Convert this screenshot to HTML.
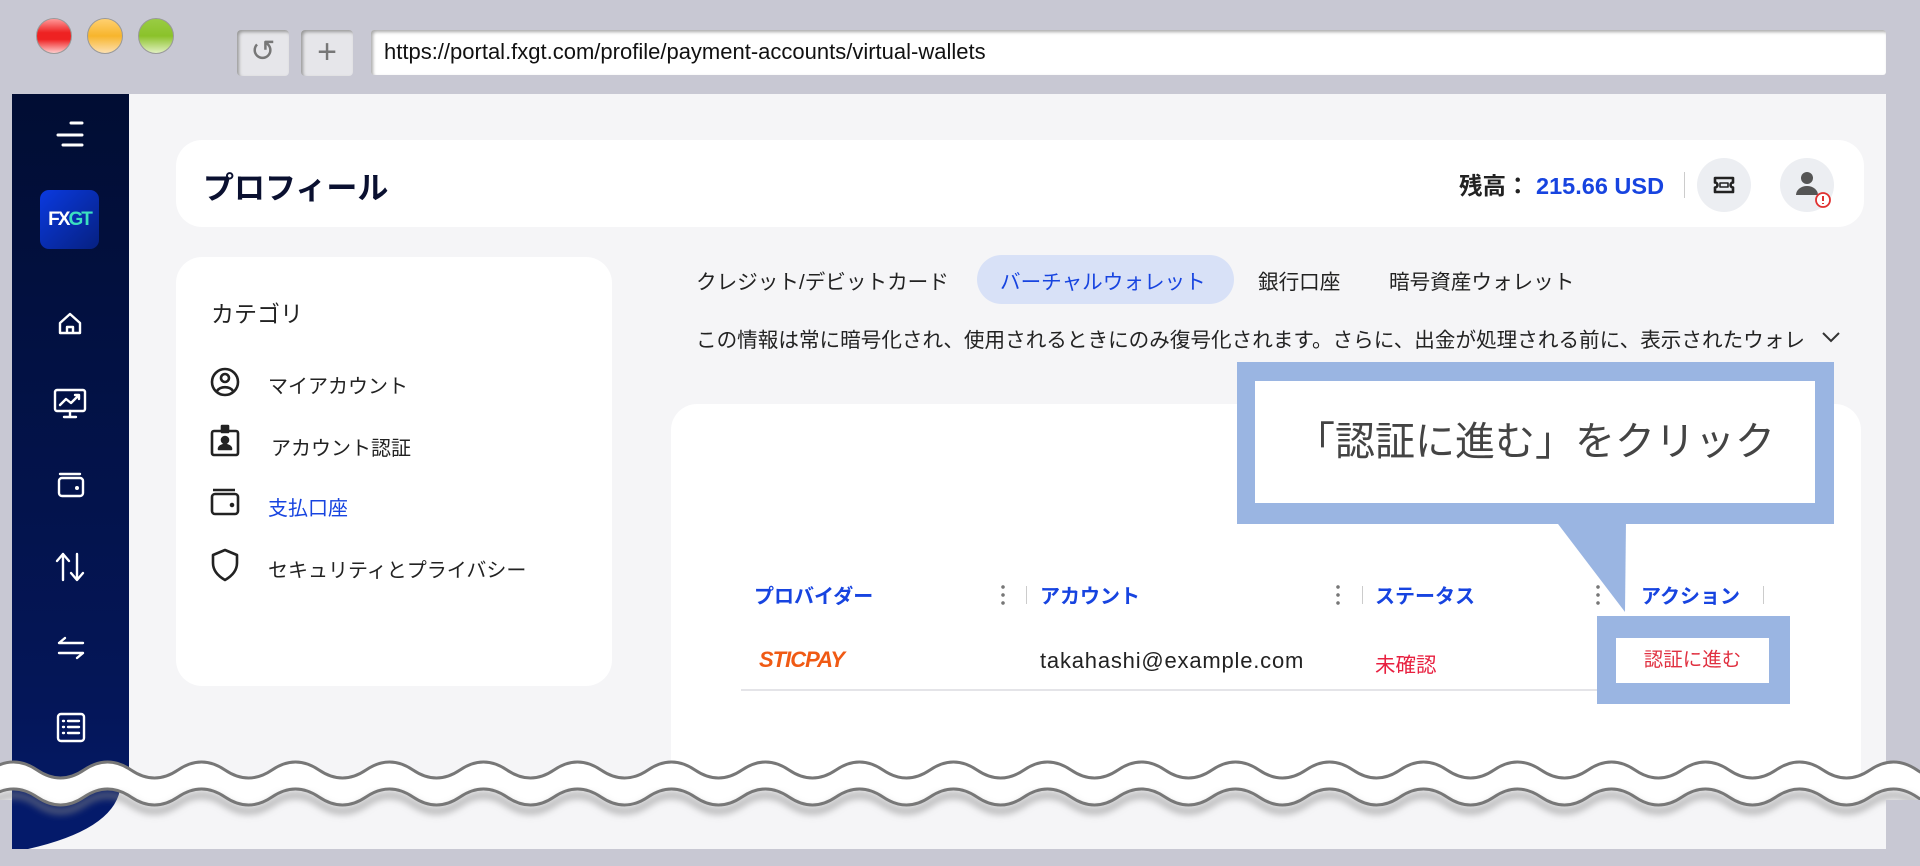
<!DOCTYPE html>
<html><head><meta charset="utf-8"><style>
*{margin:0;padding:0;box-sizing:border-box}
body{width:1920px;height:866px;overflow:hidden;background:#c8c8d3;font-family:"Liberation Sans","Noto Sans CJK JP",sans-serif;position:relative;color:#1a1a2a}
.abs{position:absolute}
.light{width:36px;height:36px;border-radius:50%;top:18px;border:1px solid #999}
.btn{top:30px;width:52px;height:46px;background:#e6e6ea;border-radius:4px;box-shadow:inset 2px 2px 3px #999;color:#777;font-size:34px;text-align:center;line-height:44px}
.url{left:371px;top:30px;width:1515px;height:45px;background:#fff;border-radius:3px;box-shadow:inset 2px 2px 3px #aaa;font-size:22px;line-height:44px;padding-left:13px;color:#111}
.main{left:12px;top:94px;width:1874px;height:755px;background:#f5f5f7;overflow:hidden}
.side{left:12px;top:94px;width:117px;height:755px;background:linear-gradient(180deg,#010d33,#041658 80%,#041a6a)}
.card{background:#fff;border-radius:26px}
.mi{left:268px;font-size:20px;color:#222}
.tab{top:265px;font-size:20.6px;color:#222}
.th{top:580px;font-size:20px;font-weight:bold;color:#1744e0}
.dots{top:583px;width:4px;height:22px;background:radial-gradient(circle,#777 1.6px,transparent 2px) 0 0/4px 8px}
.vd{top:586px;width:1px;height:18px;background:#ccc}
</style></head><body>
<div class="abs light" style="left:36px;background:linear-gradient(#f99,#e22 40%,#e22 60%,#fcc)"></div>
<div class="abs light" style="left:87px;background:linear-gradient(#ffd070,#f7b52c 50%,#fde0b0)"></div>
<div class="abs light" style="left:138px;background:linear-gradient(#9c4,#8bc22a 50%,#e0f0c0)"></div>
<div class="abs btn" style="left:237px;font-size:30px">↺</div>
<div class="abs btn" style="left:301px">+</div>
<div class="abs url">https://portal.fxgt.com/profile/payment-accounts/virtual-wallets</div>

<div class="abs main"></div>
<div class="abs side"></div>
<svg class="abs" style="left:12px;top:94px" width="120" height="680" fill="none" stroke="#fff" stroke-width="2.4" stroke-linecap="round" stroke-linejoin="round">
 <path d="M59 29h11M46 41h24M51 51h19" stroke-width="3"/>
 <path d="M48 229l10-9 10 9v10h-20z M55 239v-6h6v6"/>
 <rect x="43" y="296" width="30" height="21" rx="2"/><path d="M52 323h12M58 317v6M48 311l6-6 5 4 8-8M63 301h4v4"/>
 <rect x="47" y="384" width="24" height="18" rx="3"/><path d="M48 380h20"/><circle cx="65" cy="394" r="0.8" fill="#fff"/>
 <path d="M51 486v-26M45 467l6-7 6 7M65 460v26M59 479l6 7 6-7"/>
 <path d="M47 549h24M47 549l6-5M71 559h-24M71 559l-6 5"/>
 <rect x="46" y="620" width="26" height="27" rx="3"/><path d="M51 627h1M56 627h11M51 633h1M56 633h11M51 639h1M56 639h11"/>
</svg>
<div class="abs" style="left:40px;top:190px;width:59px;height:59px;border-radius:9px;background:linear-gradient(135deg,#0a3ae0,#062080);color:#fff;font-weight:bold;font-size:19px;line-height:59px;text-align:center;letter-spacing:-2px">FX<span style="color:#3ce0c0">GT</span></div>

<div class="abs card" style="left:176px;top:140px;width:1688px;height:87px"></div>
<div class="abs" style="left:203px;top:163px;font-size:31px;font-weight:bold;color:#0a1030">プロフィール</div>
<div class="abs" style="left:1459px;top:167px;font-size:23.5px;font-weight:bold;color:#222">残高： <span style="color:#1744e0">215.66 USD</span></div>
<div class="abs" style="left:1684px;top:172px;width:1px;height:26px;background:#ccc"></div>
<div class="abs" style="left:1697px;top:158px;width:54px;height:54px;border-radius:50%;background:#eceef2"></div>
<svg class="abs" style="left:1712px;top:174px" width="24" height="22" fill="none" stroke="#222" stroke-width="2.6" stroke-linejoin="round"><path d="M3 4h18v4.5a2.5 2.5 0 0 0 0 5V18H3v-4.5a2.5 2.5 0 0 0 0-5z"/><path d="M8 9h8v4H8z" stroke-width="1.6"/></svg>
<div class="abs" style="left:1780px;top:158px;width:54px;height:54px;border-radius:50%;background:#eceef2"></div>
<svg class="abs" style="left:1792px;top:168px" width="40" height="40"><circle cx="15" cy="10" r="6" fill="#555"/><path d="M4 27a11 9 0 0 1 22 0z" fill="#555"/><circle cx="31" cy="32" r="7" fill="#fff" stroke="#e03030" stroke-width="1.8"/><path d="M31 28v5M31 35v1" stroke="#e03030" stroke-width="2"/></svg>

<div class="abs card" style="left:176px;top:257px;width:436px;height:429px"></div>
<div class="abs" style="left:211px;top:295px;font-size:23px;color:#222">カテゴリ</div>
<svg class="abs" style="left:208px;top:365px" width="36" height="220" fill="none" stroke="#222" stroke-width="2.6" stroke-linejoin="round">
 <circle cx="17" cy="17" r="13"/><circle cx="17" cy="13" r="4"/><path d="M9 26a9 7 0 0 1 16 0"/>
 <rect x="4" y="66" width="26" height="24" rx="2"/><rect x="14" y="61" width="6" height="6" fill="#222"/><circle cx="17" cy="75" r="3" fill="#222"/><path d="M11 84a6 4 0 0 1 12 0z" fill="#222"/>
 <rect x="4" y="129" width="26" height="20" rx="3"/><path d="M5 125h22"/><circle cx="24" cy="140" r="1" fill="#222"/>
 <path d="M17 185l12 5v8c0 8-5 13-12 17-7-4-12-9-12-17v-8z"/>
</svg>
<div class="abs mi" style="top:370px">マイアカウント</div>
<div class="abs mi" style="top:432px;left:271px">アカウント認証</div>
<div class="abs mi" style="top:492px;color:#1744e0">支払口座</div>
<div class="abs mi" style="top:554px">セキュリティとプライバシー</div>

<div class="abs tab" style="left:696px">クレジット/デビットカード</div>
<div class="abs" style="left:977px;top:255px;width:257px;height:49px;border-radius:25px;background:#d8e1f7"></div>
<div class="abs tab" style="left:1000px;color:#1744e0">バーチャルウォレット</div>
<div class="abs tab" style="left:1258px">銀行口座</div>
<div class="abs tab" style="left:1389px">暗号資産ウォレット</div>
<div class="abs" style="left:696px;top:323px;font-size:20.6px;color:#222;white-space:nowrap">この情報は常に暗号化され、使用されるときにのみ復号化されます。さらに、出金が処理される前に、表示されたウォレ</div>
<svg class="abs" style="left:1821px;top:330px" width="20" height="14" fill="none" stroke="#333" stroke-width="2"><path d="M2 3l8 8 8-8"/></svg>

<div class="abs card" style="left:671px;top:404px;width:1190px;height:400px"></div>
<div class="abs th" style="left:754px">プロバイダー</div>
<div class="abs dots" style="left:1001px"></div><div class="abs vd" style="left:1026px"></div>
<div class="abs th" style="left:1040px">アカウント</div>
<div class="abs dots" style="left:1336px"></div><div class="abs vd" style="left:1362px"></div>
<div class="abs th" style="left:1375px">ステータス</div>
<div class="abs dots" style="left:1596px"></div>
<div class="abs th" style="left:1641px">アクション</div><div class="abs vd" style="left:1763px"></div>
<div class="abs" style="left:759px;top:647px;font-size:22px;font-weight:bold;font-style:italic;color:#f05a14;letter-spacing:-1px">STICPAY</div>
<div class="abs" style="left:1040px;top:648px;font-size:22px;color:#222;letter-spacing:0.8px">takahashi@example.com</div>
<div class="abs" style="left:1375px;top:648px;font-size:20.5px;color:#e82040">未確認</div>
<div class="abs" style="left:741px;top:689px;width:860px;height:2px;background:#e4e4e8"></div>
<div class="abs" style="left:1597px;top:616px;width:193px;height:88px;background:#9ab5e2"></div>
<div class="abs" style="left:1616px;top:638px;width:153px;height:45px;background:#fff;color:#e03040;font-size:19.5px;text-align:center;line-height:45px">認証に進む</div>

<svg class="abs" style="left:0;top:0" width="1920" height="866"><path d="M1555 520L1626 520L1625 612Z" fill="#9ab5e2"/></svg>
<div class="abs" style="left:1237px;top:362px;width:597px;height:162px;background:#9ab5e2"></div>
<div class="abs" style="left:1255px;top:381px;width:560px;height:122px;background:#fff;font-size:40px;color:#444;text-align:center;line-height:122px">「認証に進む」をクリック</div>

<svg class="abs" style="left:0;top:0" width="1920" height="866">
 <defs><filter id="sh" x="-5%" y="-50%" width="110%" height="300%"><feGaussianBlur stdDeviation="4"/></filter></defs>
 <path fill="#f5f5f7" d="M-10 797q23.5 -16 47 0t47 0t47 0t47 0t47 0t47 0t47 0t47 0t47 0t47 0t47 0t47 0t47 0t47 0t47 0t47 0t47 0t47 0t47 0t47 0t47 0t47 0t47 0t47 0t47 0t47 0t47 0t47 0t47 0t47 0t47 0t47 0t47 0t47 0t47 0t47 0t47 0t47 0t47 0t47 0t47 0t47 0t47 0L2011 849H-10Z"/>
 <path d="M12 790H120Q112 830 28 849H12Z" fill="#041a6a"/>
 <path fill="#fff" d="M-10 770q23.5 -16 47 0t47 0t47 0t47 0t47 0t47 0t47 0t47 0t47 0t47 0t47 0t47 0t47 0t47 0t47 0t47 0t47 0t47 0t47 0t47 0t47 0t47 0t47 0t47 0t47 0t47 0t47 0t47 0t47 0t47 0t47 0t47 0t47 0t47 0t47 0t47 0t47 0t47 0t47 0t47 0t47 0t47 0t47 0L2011 797q-23.5 -16 -47 0t-47 0t-47 0t-47 0t-47 0t-47 0t-47 0t-47 0t-47 0t-47 0t-47 0t-47 0t-47 0t-47 0t-47 0t-47 0t-47 0t-47 0t-47 0t-47 0t-47 0t-47 0t-47 0t-47 0t-47 0t-47 0t-47 0t-47 0t-47 0t-47 0t-47 0t-47 0t-47 0t-47 0t-47 0t-47 0t-47 0t-47 0t-47 0t-47 0t-47 0t-47 0t-47 0Z"/>
 <path fill="none" stroke="#888" stroke-width="4" filter="url(#sh)" transform="translate(0,6)" d="M-10 797q23.5 -16 47 0t47 0t47 0t47 0t47 0t47 0t47 0t47 0t47 0t47 0t47 0t47 0t47 0t47 0t47 0t47 0t47 0t47 0t47 0t47 0t47 0t47 0t47 0t47 0t47 0t47 0t47 0t47 0t47 0t47 0t47 0t47 0t47 0t47 0t47 0t47 0t47 0t47 0t47 0t47 0t47 0t47 0t47 0"/>
 <g fill="none" stroke="#777" stroke-width="3">
 <path d="M-10 770q23.5 -16 47 0t47 0t47 0t47 0t47 0t47 0t47 0t47 0t47 0t47 0t47 0t47 0t47 0t47 0t47 0t47 0t47 0t47 0t47 0t47 0t47 0t47 0t47 0t47 0t47 0t47 0t47 0t47 0t47 0t47 0t47 0t47 0t47 0t47 0t47 0t47 0t47 0t47 0t47 0t47 0t47 0t47 0t47 0"/>
 <path d="M-10 797q23.5 -16 47 0t47 0t47 0t47 0t47 0t47 0t47 0t47 0t47 0t47 0t47 0t47 0t47 0t47 0t47 0t47 0t47 0t47 0t47 0t47 0t47 0t47 0t47 0t47 0t47 0t47 0t47 0t47 0t47 0t47 0t47 0t47 0t47 0t47 0t47 0t47 0t47 0t47 0t47 0t47 0t47 0t47 0t47 0"/>
 </g>
 <rect x="0" y="849" width="1920" height="17" fill="#c8c8d3"/>
 <rect x="1886" y="800" width="34" height="66" fill="#c8c8d3"/>
 <rect x="0" y="800" width="12" height="66" fill="#c8c8d3"/>
</svg>
</body></html>
